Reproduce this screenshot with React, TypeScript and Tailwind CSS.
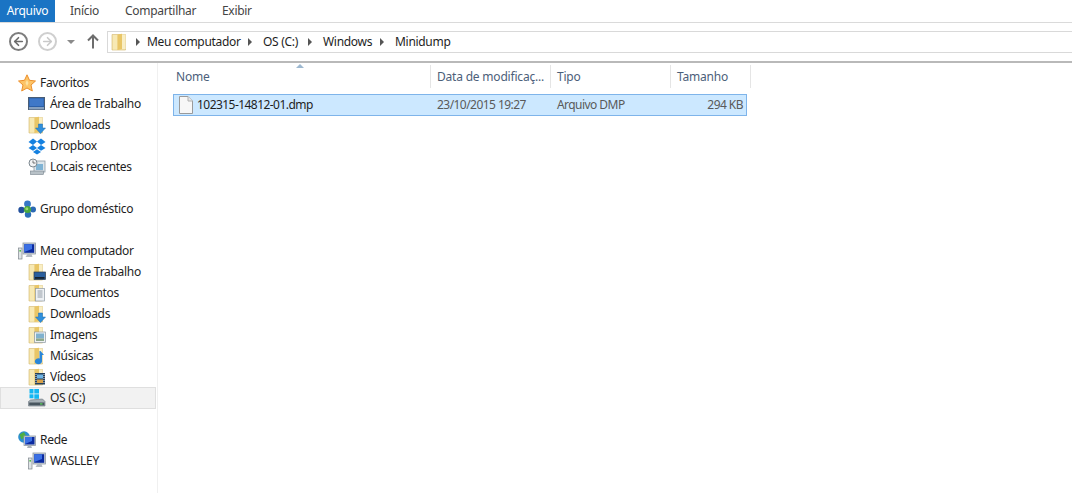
import { ArrowLeft, ArrowRight } from "lucide-react";
import type { ReactNode } from "react";

const Folder = ({ children }: { children?: ReactNode }) => (
  <svg width="18" height="18" viewBox="0 0 18 18" className="shrink-0">
    <path d="M1 1.5 H14.5 V17 H1 Z" fill="#f4e3a8" stroke="#d8c07f" strokeWidth="0.7" />
    <path d="M2 2 H6 V16.5 H2 Z" fill="#f7e9b4" />
    <path d="M6.5 1.5 L11 0.8 V16 L6.5 17 Z" fill="#e9c667" />
    <path d="M11 1.5 H14.5 V16 H11 Z" fill="#f9eec4" />
    {children}
  </svg>
);

const DownArrow = () => (
  <path d="M10.5 8 H14.5 V12 H17.5 L12.5 17.5 L7.5 12 H10.5 Z" fill="#2f8fdc" stroke="#1b6db5" strokeWidth="0.5" />
);

const FavStar = () => (
  <svg width="18" height="18" viewBox="0 0 18 18">
    <path d="M9 0.8 L11.5 6.3 L17.5 7 L13 11 L14.3 17 L9 14 L3.7 17 L5 11 L0.5 7 L6.5 6.3 Z" fill="#fcc468" stroke="#ec8f2c" strokeWidth="1" />
    <path d="M9 6 L10.5 9 L9 12 L7.5 9 Z" fill="#fde3a4" />
  </svg>
);

const Desktop = () => (
  <svg width="18" height="18" viewBox="0 0 18 18">
    <rect x="0.5" y="2.5" width="16" height="12" fill="#2b5fa8" stroke="#4a5d75" />
    <path d="M1.5 3.5 H15.5 V11 H1.5 Z" fill="#3f78c8" />
    <rect x="1" y="12" width="15" height="2.4" fill="#86a0bf" />
  </svg>
);

const Dropbox = () => (
  <svg width="18" height="18" viewBox="0 0 18 18" fill="#1581e0">
    <path d="M5 1.5 L9 4.5 L5 8 L0.5 5 Z" />
    <path d="M13 1.5 L17.5 5 L13 8 L9 4.5 Z" />
    <path d="M5 8 L9 11 L5 13.8 L0.5 11 Z" />
    <path d="M13 8 L17.5 11 L13 13.8 L9 11 Z" />
    <path d="M5 15 L9 12.2 L13 15 L9 17.5 Z" />
  </svg>
);

const Recent = () => (
  <svg width="18" height="18" viewBox="0 0 18 18">
    <rect x="6" y="3" width="11" height="11" fill="#dde6ec" stroke="#8d99a3" strokeWidth="0.8" />
    <rect x="8" y="6" width="7" height="6" fill="#7fb3d4" />
    <circle cx="5" cy="5" r="4" fill="#f1f2f3" stroke="#7d8890" />
    <path d="M5 2.5 V5 H7.5" stroke="#555" fill="none" strokeWidth="0.8" />
    <rect x="2.5" y="13" width="13" height="3.5" fill="#b8c1c7" stroke="#77838c" strokeWidth="0.6" />
  </svg>
);

const Homegroup = () => (
  <svg width="18" height="18" viewBox="0 0 18 18">
    <circle cx="3.5" cy="10" r="3.2" fill="#214f9c" />
    <circle cx="9.5" cy="4" r="3.4" fill="#3577c6" />
    <circle cx="15" cy="9.5" r="3" fill="#2b69b4" />
    <circle cx="10" cy="14.5" r="3.2" fill="#2c6fb8" />
    <circle cx="9.5" cy="9.5" r="3.6" fill="#49a83e" />
    <circle cx="8.8" cy="8.8" r="1.5" fill="#9ad86f" />
  </svg>
);

const Computer = () => (
  <svg width="18" height="18" viewBox="0 0 18 18">
    <rect x="0.5" y="6" width="3.5" height="11" fill="#dfe3e6" stroke="#7f878d" strokeWidth="0.7" />
    <rect x="1.4" y="8" width="1.6" height="1.6" fill="#54c04a" />
    <rect x="5" y="1" width="12.5" height="11" fill="#cfd5da" stroke="#8f99a3" strokeWidth="0.8" />
    <rect x="6.2" y="2.2" width="10" height="8.6" fill="#0b2aa0" />
    <path d="M6.2 2.2 H14 V7 L6.2 10 Z" fill="#3b70e4" />
    <path d="M9.5 12 H13.5 L14.5 15 H7.5 Z" fill="#b5bcc2" />
  </svg>
);

const Drive = () => (
  <svg width="18" height="18" viewBox="0 0 18 18">
    <g fill="#14b7f2">
      <rect x="1.5" y="0" width="4" height="4.5" />
      <rect x="6.3" y="-0.5" width="4.7" height="5" />
      <rect x="1.5" y="5.3" width="4" height="4" />
      <rect x="6.3" y="5.3" width="4.7" height="4.5" />
    </g>
    <path d="M2.5 11 L14.5 10 L17 12.5 V17 H0.5 V12.5 Z" fill="#a4aeb5" stroke="#667078" strokeWidth="0.6" />
    <rect x="1.2" y="13.5" width="15.2" height="2.8" fill="#48555e" />
    <rect x="12" y="14.3" width="2.5" height="1.2" fill="#58d858" />
  </svg>
);

const Network = () => (
  <svg width="18" height="18" viewBox="0 0 18 18">
    <circle cx="6" cy="6" r="5.8" fill="#2b8fd0" />
    <path d="M1.5 3.5 L6 1 L8 5 L3.5 8.5 Z" fill="#4fae44" />
    <rect x="6" y="5" width="11.5" height="9.5" fill="#cfd5da" stroke="#8f99a3" strokeWidth="0.8" />
    <rect x="7" y="6" width="9.5" height="7.5" fill="#0b2aa0" />
    <path d="M7 6 H14 V10 L7 13 Z" fill="#3b70e4" />
    <path d="M10 14.5 H13 L14 17 H9 Z" fill="#a9b1b8" />
  </svg>
);

const sections: { icon: ReactNode; label: string; active?: boolean }[][] = [
  [
    { icon: <FavStar />, label: "Favoritos" },
    { icon: <Desktop />, label: "Área de Trabalho" },
    { icon: <Folder><DownArrow /></Folder>, label: "Downloads" },
    { icon: <Dropbox />, label: "Dropbox" },
    { icon: <Recent />, label: "Locais recentes" },
  ],
  [{ icon: <Homegroup />, label: "Grupo doméstico" }],
  [
    { icon: <Computer />, label: "Meu computador" },
    { icon: <Folder><rect x="6" y="9" width="11.5" height="7.5" fill="#2a5f9e" stroke="#2c3a48" strokeWidth="0.7" /><rect x="7" y="14" width="9.5" height="1.8" fill="#16222e" /></Folder>, label: "Área de Trabalho" },
    { icon: <Folder><rect x="7.5" y="4.5" width="9" height="12.5" fill="#eef1f4" stroke="#8d99a3" strokeWidth="0.7" /><path d="M9.5 7 H14.5 M9.5 9 H14.5 M9.5 11 H14.5 M9.5 13 H14.5" stroke="#7d8b96" strokeWidth="0.8" /></Folder>, label: "Documentos" },
    { icon: <Folder><DownArrow /></Folder>, label: "Downloads" },
    { icon: <Folder><rect x="6.5" y="6" width="11" height="10.5" fill="#eef1f3" stroke="#8d99a3" strokeWidth="0.7" /><rect x="8" y="7.5" width="8" height="5" fill="#7fb1cf" /><rect x="8" y="12.5" width="8" height="2.5" fill="#8fa88a" /></Folder>, label: "Imagens" },
    { icon: <Folder><path d="M12.5 4 L16 8 L14 8 V14 A3.6 3 0 1 1 11.5 11.5 V4 Z" fill="#2a86d8" /></Folder>, label: "Músicas" },
    { icon: <Folder><rect x="7" y="5" width="10" height="11.5" fill="#27415c" /><rect x="9" y="6.5" width="6" height="4" fill="#6fb5e6" /><rect x="9" y="11.5" width="6" height="3.5" fill="#d8a24a" /><path d="M8 6 V16 M16 6 V16" stroke="#dfe6ec" strokeDasharray="1 1" /></Folder>, label: "Vídeos" },
    { icon: <Drive />, label: "OS (C:)", active: true },
  ],
  [
    { icon: <Network />, label: "Rede" },
    { icon: <Computer />, label: "WASLLEY" },
  ],
];

function NavRow({ icon, label, active, child }: { icon: ReactNode; label: string; active?: boolean; child: boolean }) {
  return (
    <div className={`flex items-center gap-[4px] ${active ? "mb-[-1px] mr-px h-[22px] border border-[#dfdfdf] bg-[#f2f2f2] pl-[27px]" : child ? "h-[21px] pl-[28px]" : "h-[21px] pl-[18px]"}`}>
      {icon}
      <span className="whitespace-nowrap tracking-[-0.3px]">{label}</span>
    </div>
  );
}

const Chevron = () => <span className="h-0 w-0 border-y-[4px] border-l-[4px] border-y-transparent border-l-[#555]" />;

const crumbs = [
  ["Meu computador", "w-[116px] pr-[11px]"],
  ["OS (C:)", "w-[60px] pr-[11px]"],
  ["Windows", "w-[72px] pr-[11px]"],
];

const tabs = [
  ["Início", "w-[55px]"],
  ["Compartilhar", "w-[97px]"],
  ["Exibir", "w-[60px]"],
];

const columns = [
  ["Data de modificaç...", "w-[120px]"],
  ["Tipo", "w-[120px]"],
  ["Tamanho", "w-[80px]"],
];

export default function App() {
  return (
    <div className="flex h-[493px] w-[1072px] flex-col overflow-hidden bg-white font-['Noto_Sans','Open_Sans',sans-serif] text-[12px] text-[#1e1e1e]">
      <div className="flex h-[23px] shrink-0 border-b border-[#dadada] tracking-[-0.3px] text-[#444]">
        <div className="flex w-[55px] items-center justify-center bg-[#1a74c4] text-white">Arquivo</div>
        {tabs.map(([name, cls]) => (
          <div key={name} className={`flex items-center pl-[15px] ${cls}`}>{name}</div>
        ))}
      </div>

      <div className="flex h-[40px] shrink-0 items-center border-b-2 border-[#b9b9b9] pb-[4px] pt-[3px]">
        <div className="flex w-[107px] shrink-0 items-center pl-[9px]">
          <span className="flex h-[19px] w-[19px] items-center justify-center rounded-full border-2 border-[#7d7d7d] bg-white">
            <ArrowLeft size={13} strokeWidth={3} className="text-[#6b6b6b]" />
          </span>
          <span className="ml-[10px] flex h-[19px] w-[19px] items-center justify-center rounded-full border-2 border-[#cfcfcf]">
            <ArrowRight size={13} strokeWidth={3} className="text-[#c9c9c9]" />
          </span>
          <span className="ml-[10px] h-0 w-0 border-x-[4px] border-t-[4px] border-x-transparent border-t-[#8a8a8a]" />
          <svg width="12" height="15" viewBox="0 0 12 15" className="ml-[12px] shrink-0">
            <path d="M6 1 V14.5 M1 6.5 L6 1.5 L11 6.5" fill="none" stroke="#6d6d6d" strokeWidth="2" />
          </svg>
        </div>
        <div className="flex h-[22px] flex-1 items-center border-y border-l border-[#d9d9d9] pl-[3px]">
          <Folder />
          <div className="flex w-[18px] shrink-0 justify-center"><Chevron /></div>
          {crumbs.map(([name, cls]) => (
            <div key={name} className={`flex shrink-0 items-center justify-between tracking-[-0.3px] ${cls}`}>
              <span>{name}</span>
              <Chevron />
            </div>
          ))}
          <span className="tracking-[-0.3px]">Minidump</span>
        </div>
      </div>

      <div className="flex flex-1">
        <nav className="flex w-[158px] shrink-0 flex-col gap-[21px] border-r border-[#f0f0f0] pt-[9px]">
          {sections.map((items) => (
            <div key={items[0].label}>
              {items.map((item, i) => (
                <NavRow key={item.label} icon={item.icon} label={item.label} active={item.active} child={i > 0} />
              ))}
            </div>
          ))}
        </nav>

        <main className="flex-1 pl-[11px]">
          <div className="relative flex h-[25px] pt-[2px] tracking-[-0.2px] text-[#4c607a]">
            <span className="absolute left-[127px] top-[1px] h-0 w-0 border-x-[4px] border-b-[4px] border-x-transparent border-b-[#9db8d0]" />
            <div className="flex w-[262px] items-center border-r border-[#e5e5e5] pl-[7px]">Nome</div>
            {columns.map(([name, cls]) => (
              <div key={name} className={`flex items-center border-r border-[#e5e5e5] pl-[6px] ${cls}`}>{name}</div>
            ))}
          </div>
          <div className="ml-[4px] mt-[6px] flex h-[22px] w-[574px] items-center border border-[#7eb4ea] bg-[#cce8ff] tracking-[-0.55px] text-[#5a5a5a]">
            <div className="flex w-[256px] items-center gap-[3px] pl-[4px] text-[#1e1e1e]">
              <svg width="16" height="18" viewBox="0 0 16 18" className="shrink-0">
                <path d="M1.5 0.5 H10 L14.5 5 V17.5 H1.5 Z" fill="#f7f7f7" stroke="#9a9a9a" />
                <path d="M10 0.5 V5 H14.5" fill="#e8e8e8" stroke="#b0b0b0" />
              </svg>
              102315-14812-01.dmp
            </div>
            <div className="w-[120px] pl-[7px]">23/10/2015 19:27</div>
            <div className="w-[120px] pl-[7px]">Arquivo DMP</div>
            <div className="flex-1 pr-[3px] text-right">294 KB</div>
          </div>
        </main>
      </div>
    </div>
  );
}
